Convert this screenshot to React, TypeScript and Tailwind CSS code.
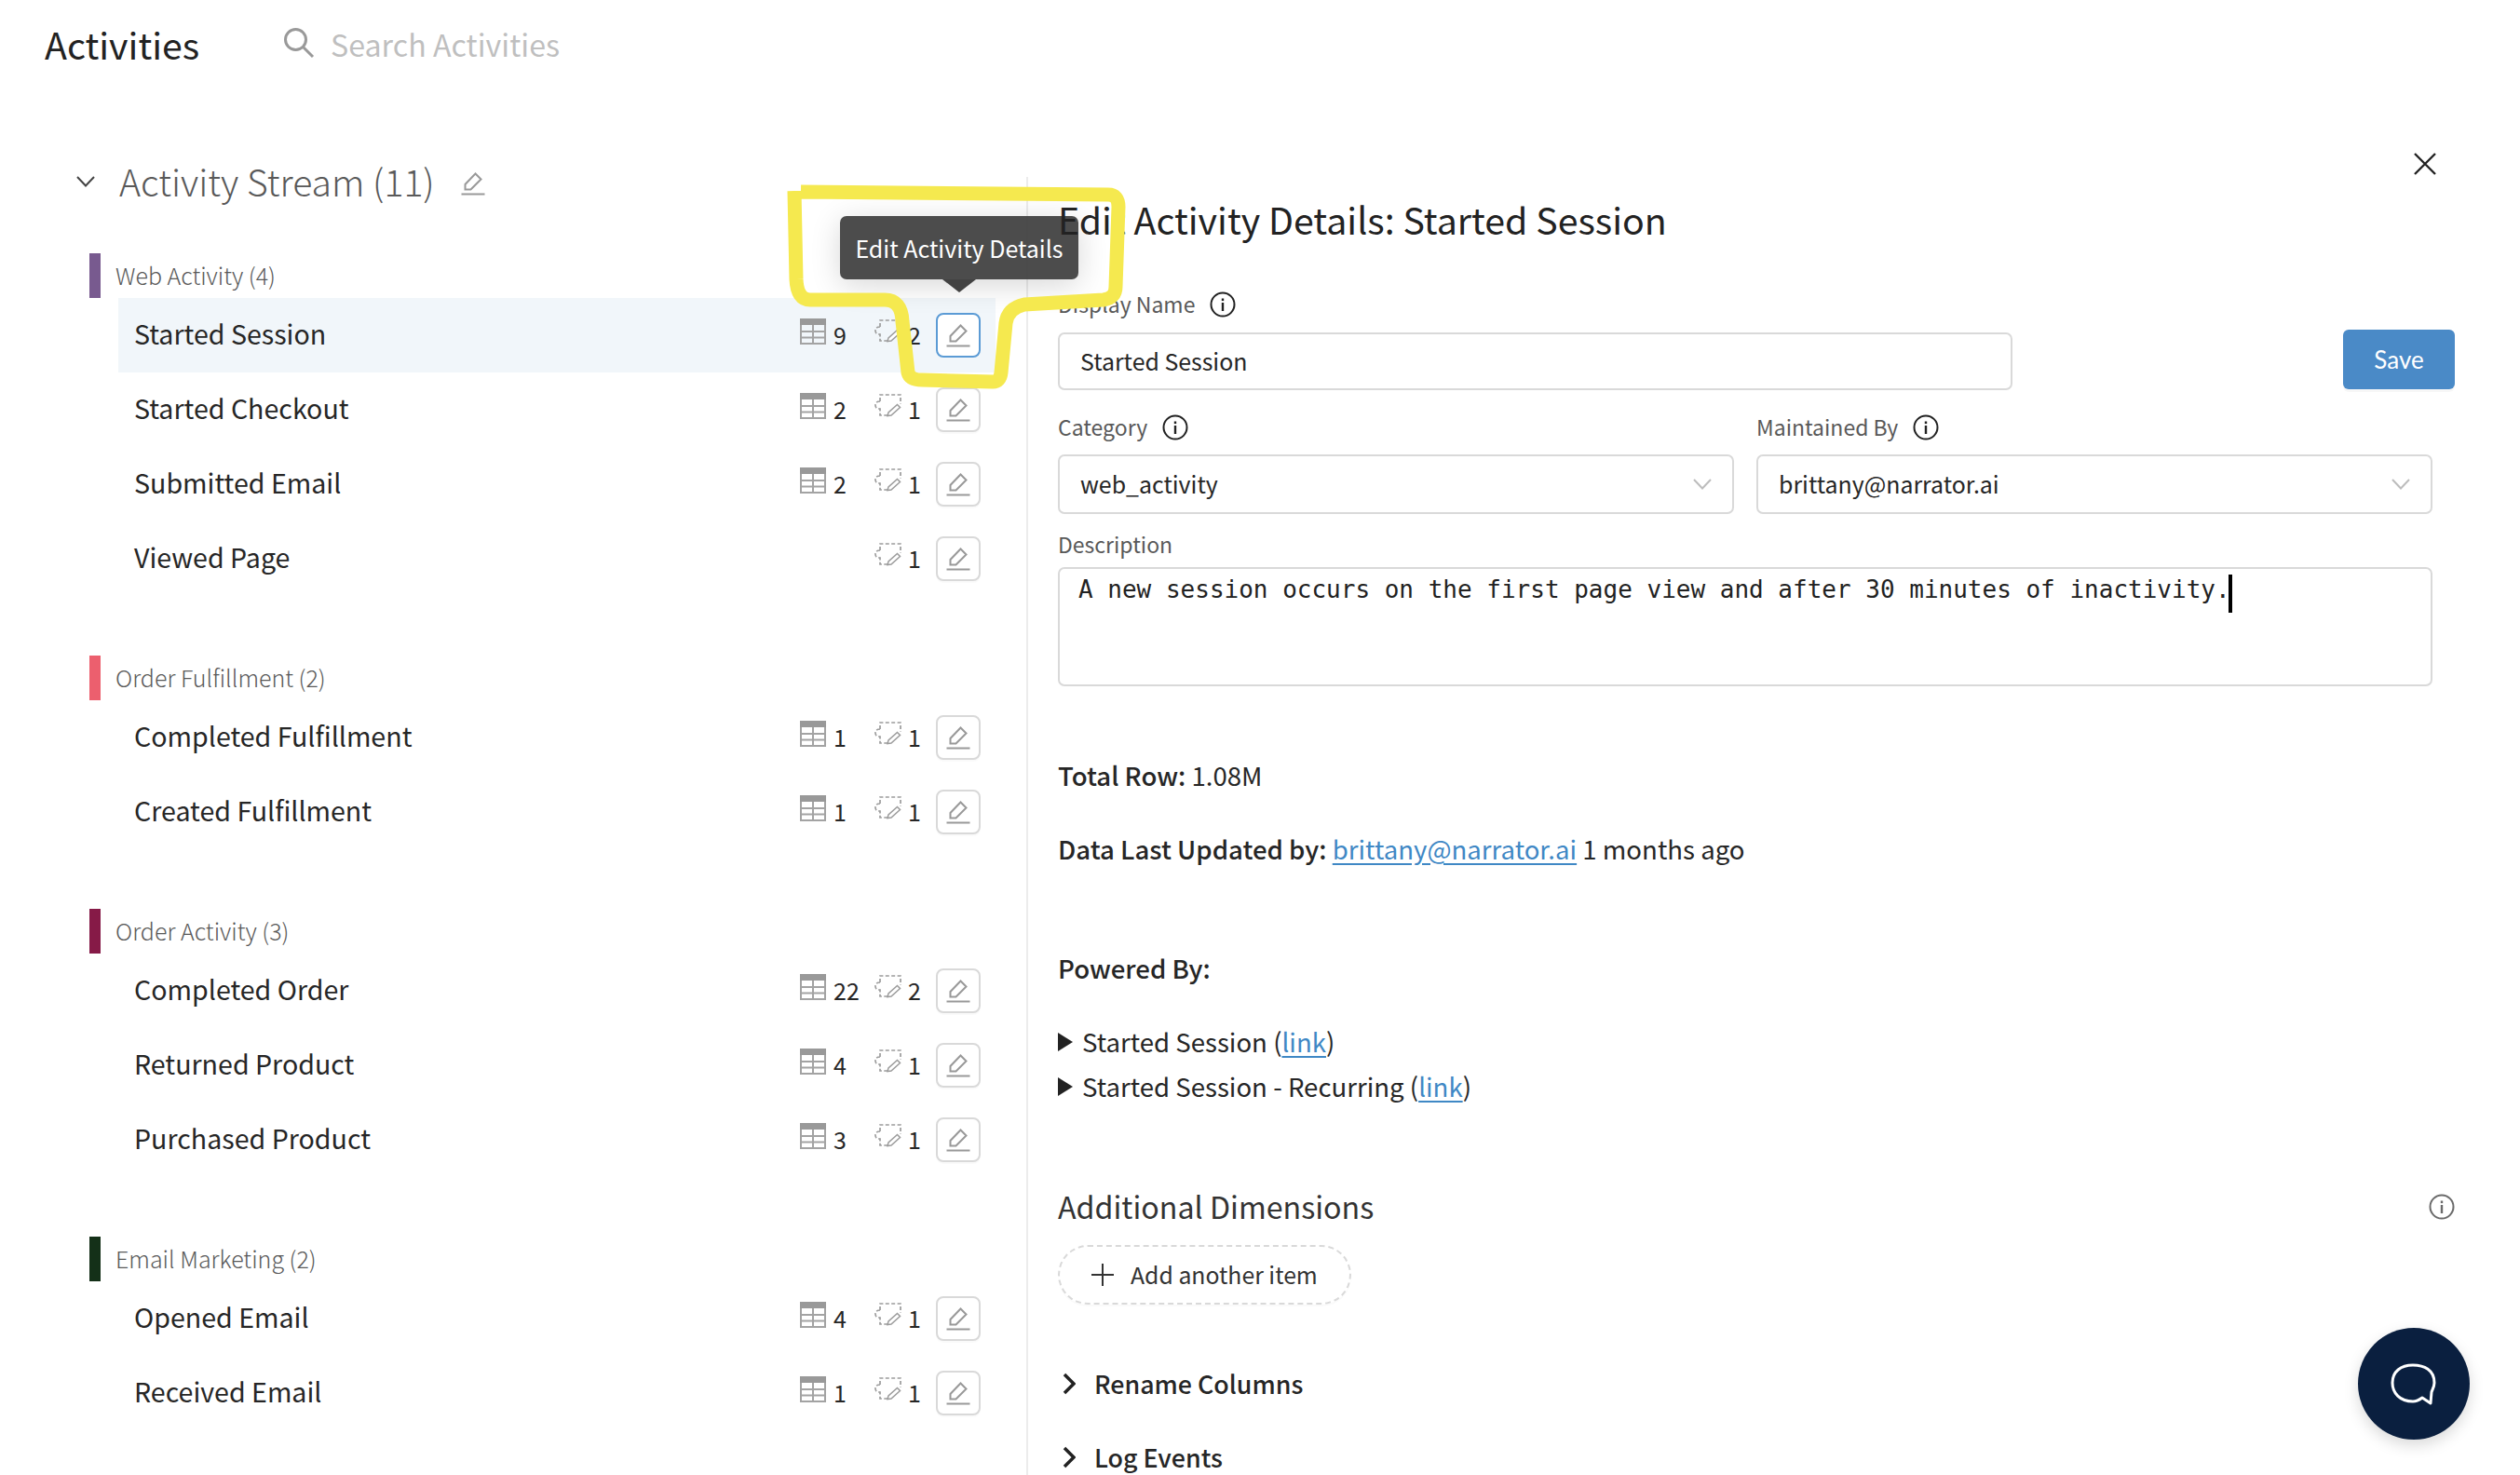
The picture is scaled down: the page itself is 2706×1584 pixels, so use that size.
import React from 'react';

const PencilIcon = ({ color = '#999' }: { color?: string }) => (
  <svg width="26" height="26" viewBox="0 0 26 26" fill="none" stroke={color} strokeWidth="2">
    <path d="M4.5 19.5 V14 L15.5 2.5 L21.5 8.5 L10.5 19.5 Z" strokeLinejoin="miter" />
    <path d="M0.5 24.5 H25.5" />
  </svg>
);

const TableIcon = () => (
  <svg width="28" height="28" viewBox="0 0 28 28" fill="none" stroke="#a3a3a3" strokeWidth="2" className="mt-[-8px]">
    <rect x="1" y="1" width="26" height="26" />
    <rect x="0" y="0" width="28" height="7" fill="#999" stroke="none" />
    <path d="M1 14 H27 M1 20.5 H27 M14 7 V27" />
  </svg>
);

const TagIcon = () => (
  <svg width="30" height="26" viewBox="0 0 30 26" fill="none" className="mt-[-8px]">
    <path
      d="M6 8 V1 H28 V11 M6 8 C2 8 1 10 1 12 C1 15 3 16 6 16 V23 H14"
      stroke="#9c9c9c"
      strokeWidth="1.7"
      strokeDasharray="4 2.4"
    />
    <path d="M14 23.5 L15 20 L24.5 11.5 L27.5 14.5 L18 23 Z" stroke="#9c9c9c" strokeWidth="1.5" fill="#fff" />
  </svg>
);

const InfoIcon = ({ color = '#222' }: { color?: string }) => (
  <svg width="28" height="28" viewBox="0 0 28 28" fill="none">
    <circle cx="14" cy="14" r="12.5" stroke={color} strokeWidth="2" />
    <rect x="12.8" y="12" width="2.4" height="9" fill={color} />
    <rect x="12.8" y="7.5" width="2.4" height="2.6" fill={color} />
  </svg>
);

const ChevronDown = () => (
  <svg width="20" height="12" viewBox="0 0 20 12" fill="none" stroke="#bdbdbd" strokeWidth="2">
    <path d="M1 1 L10 10.5 L19 1" />
  </svg>
);

const ChevronRight = () => (
  <svg width="14" height="24" viewBox="0 0 14 24" fill="none" stroke="#222" strokeWidth="3.5">
    <path d="M2 2 L12 12 L2 22" />
  </svg>
);

const Triangle = () => (
  <svg width="16" height="20" viewBox="0 0 16 20" className="shrink-0">
    <path d="M0 0 L16 10 L0 20 Z" fill="#222" />
  </svg>
);

type Row = { name: string; table?: number; tag: number; active?: boolean };
type Group = { label: string; color: string; rows: Row[] };

const groups: Group[] = [
  {
    label: 'Web Activity (4)',
    color: 'bg-[#785a8f]',
    rows: [
      { name: 'Started Session', table: 9, tag: 2, active: true },
      { name: 'Started Checkout', table: 2, tag: 1 },
      { name: 'Submitted Email', table: 2, tag: 1 },
      { name: 'Viewed Page', tag: 1 },
    ],
  },
  {
    label: 'Order Fulfillment (2)',
    color: 'bg-[#ec5f6e]',
    rows: [
      { name: 'Completed Fulfillment', table: 1, tag: 1 },
      { name: 'Created Fulfillment', table: 1, tag: 1 },
    ],
  },
  {
    label: 'Order Activity (3)',
    color: 'bg-[#861a47]',
    rows: [
      { name: 'Completed Order', table: 22, tag: 2 },
      { name: 'Returned Product', table: 4, tag: 1 },
      { name: 'Purchased Product', table: 3, tag: 1 },
    ],
  },
  {
    label: 'Email Marketing (2)',
    color: 'bg-[#143018]',
    rows: [
      { name: 'Opened Email', table: 4, tag: 1 },
      { name: 'Received Email', table: 1, tag: 1 },
    ],
  },
];

const ActivityRow = ({ row }: { row: Row }) => (
  <div className={`ml-[127px] mr-[33px] h-[80px] flex items-center pl-[17px] pr-[16px] ${row.active ? 'bg-[#f1f6fa]' : ''}`}>
    <span className="flex-1 pb-[3px] text-[28.6px] leading-none text-[#262626]">{row.name}</span>
    <div className="w-[80px] flex items-center gap-[8px] text-[25px] leading-none text-[#262626]">
      {row.table !== undefined && (
        <>
          <TableIcon />
          <span className="pb-[1px]">{row.table}</span>
        </>
      )}
    </div>
    <div className="w-[66px] flex items-center gap-[6px] text-[25px] leading-none text-[#262626]">
      <TagIcon />
      <span className="pb-[1px]">{row.tag}</span>
    </div>
    <div
      className={`w-[48px] h-[48px] rounded-[8px] border-2 bg-white flex items-center justify-center ${
        row.active ? 'border-[#5b9bd5]' : 'border-[#d9d9d9] shadow-[0_2px_0_rgba(0,0,0,0.02)]'
      }`}
    >
      <PencilIcon />
    </div>
  </div>
);

const Label = ({ children, info }: { children: React.ReactNode; info?: boolean }) => (
  <div className="h-[30px] flex items-center gap-[16px] text-[23px] leading-none text-[#595959]">
    <span className="pb-[2px]">{children}</span>
    {info && <InfoIcon />}
  </div>
);

const Box = ({ children, className = '' }: { children: React.ReactNode; className?: string }) => (
  <div className={`rounded-[7px] border-2 border-[#d9d9d9] bg-white flex items-center pb-[1px] text-[24.9px] leading-none text-[#262626] ${className}`}>
    {children}
  </div>
);

const Select = ({ value, width }: { value: string; width: string }) => (
  <Box className={`${width} h-[64px] pl-[22px] pr-[22px] justify-between`}>
    <span>{value}</span>
    <ChevronDown />
  </Box>
);

const Line = ({ children, className = '' }: { children: React.ReactNode; className?: string }) => (
  <div className={`h-[40px] pb-[2px] flex items-center text-[27.6px] leading-none text-[#262626] whitespace-pre ${className}`}>{children}</div>
);

const Toggle = ({ children, className = '' }: { children: React.ReactNode; className?: string }) => (
  <div className={`h-[40px] pb-[2px] pl-[5px] flex items-center gap-[20px] text-[26.8px] font-medium leading-none text-[#262626] ${className}`}>
    <ChevronRight />
    <span>{children}</span>
  </div>
);

const DocLink = ({ children }: { children: React.ReactNode }) => (
  <a className="text-[#3f88c5] underline underline-offset-[4px]">{children}</a>
);

export default function App() {
  return (
    <div className="relative w-[2706px] h-[1584px] overflow-hidden bg-white font-['Noto_Sans_CJK_SC','Noto_Sans',sans-serif]">
      <header className="h-[96px] mb-[64px] pl-[48px] flex items-center">
        <h1 className="w-[256px] pb-[2px] text-[39.3px] leading-none text-[#222]">Activities</h1>
        <svg width="34" height="34" viewBox="0 0 34 34" fill="none" stroke="#999" strokeWidth="3" className="mt-[-4px]">
          <circle cx="13.5" cy="13.5" r="11" />
          <path d="M21.5 21.5 L32 32" />
        </svg>
        <span className="ml-[17px] pb-[2px] text-[32.2px] leading-none text-[#bfbfbf]">Search Activities</span>
      </header>

      <main className="flex h-[1424px]">
        <section className="w-[1102px] relative z-0">
          <div className="h-[70px] flex items-center pl-[82px]">
            <svg width="20" height="12" viewBox="0 0 20 12" fill="none" stroke="#444" strokeWidth="2">
              <path d="M1 1 L10 10.5 L19 1" />
            </svg>
            <span className="ml-[26px] text-[39.2px] font-light leading-none text-[#595959]">Activity Stream (11)</span>
            <span className="ml-[28px] mt-[4px]">
              <PencilIcon />
            </span>
          </div>
          <div className="pt-[42px] flex flex-col gap-[64px]">
            {groups.map((g) => (
              <div key={g.label}>
                <div className="h-[48px] flex pl-[96px]">
                  <span className={`w-[12px] h-[48px] ${g.color}`} />
                  <span className="ml-[16px] pt-[6px] text-[25px] font-light leading-[34px] text-[#595959]">{g.label}</span>
                </div>
                {g.rows.map((r) => (
                  <ActivityRow key={r.name} row={r} />
                ))}
              </div>
            ))}
          </div>
        </section>

        <div className="w-[2px] mt-[30px] bg-[#ececec]" />

        <section className="flex-1 pl-[32px] pr-[70px]">
          <div className="h-[32px] flex justify-end pr-[20px]">
            <svg width="24" height="24" viewBox="0 0 24 24" fill="none" stroke="#222" strokeWidth="2.4" className="mt-[4px]">
              <path d="M1 1 L23 23 M23 1 L1 23" />
            </svg>
          </div>
          <h2 className="relative z-20 mt-[14px] h-[60px] pb-[2px] flex items-center text-[39.3px] leading-none text-[#222]">
            Edit Activity Details: Started Session
          </h2>
          <div className="mt-[46px]">
            <Label info>Display Name</Label>
          </div>
          <div className="mt-[15px] flex justify-between">
            <Box className="w-[1025px] h-[62px] pl-[22px]">Started Session</Box>
            <button className="w-[120px] h-[64px] mt-[-3px] rounded-[6px] bg-[#4a8ac7] text-white text-[26px] font-['Lato',sans-serif] shadow-[0_3px_0_rgba(0,0,0,0.03)]">
              Save
            </button>
          </div>
          <div className="mt-[25px] flex gap-[24px]">
            <div>
              <Label info>Category</Label>
              <div className="mt-[14px]">
                <Select value="web_activity" width="w-[726px]" />
              </div>
            </div>
            <div>
              <Label info>Maintained By</Label>
              <div className="mt-[14px]">
                <Select value="brittany@narrator.ai" width="w-[726px]" />
              </div>
            </div>
          </div>
          <div className="mt-[18px]">
            <Label>Description</Label>
          </div>
          <div className="mt-[9px] w-[1476px] h-[128px] rounded-[7px] border-2 border-[#d9d9d9] pl-[20px] pt-[2px] flex items-start">
            <span className="font-['DejaVu_Sans_Mono',monospace] text-[26px] leading-[40px] text-[#222] whitespace-pre">
              A new session occurs on the first page view and after 30 minutes of inactivity.
            </span>
            <span className="w-[4px] h-[41px] ml-[-2px] bg-black mt-[4px]" />
          </div>
          <Line className="mt-[77px]">
            <span>
              <b className="font-medium">Total Row:</b> 1.08M
            </span>
          </Line>
          <Line className="mt-[39px]">
            <span>
              <b className="font-medium">Data Last Updated by:</b> <DocLink>brittany@narrator.ai</DocLink> 1 months ago
            </span>
          </Line>
          <Line className="mt-[88px] font-medium">Powered By:</Line>
          <Line className="mt-[39px] gap-[10px]">
            <Triangle />
            <span>
              Started Session (<DocLink>link</DocLink>)
            </span>
          </Line>
          <Line className="mt-[8px] gap-[10px]">
            <Triangle />
            <span>
              Started Session - Recurring (<DocLink>link</DocLink>)
            </span>
          </Line>
          <div className="mt-[83px] h-[50px] flex items-center justify-between">
            <span className="pb-[2px] text-[32.2px] leading-none text-[#333]">Additional Dimensions</span>
            <InfoIcon color="#6b6b6b" />
          </div>
          <div className="mt-[16px] w-[315px] h-[64px] rounded-full border-2 border-dashed border-[#d9d9d9] flex items-center pl-[34px] gap-[18px] text-[24.8px] leading-none text-[#333] shadow-[0_2px_0_rgba(0,0,0,0.02)]">
            <svg width="24" height="24" viewBox="0 0 24 24" stroke="#333" strokeWidth="2">
              <path d="M12 0 V24 M0 12 H24" />
            </svg>
            <span className="pb-[2px]">Add another item</span>
          </div>
          <Toggle className="mt-[66px]">Rename Columns</Toggle>
          <Toggle className="mt-[39px]">Log Events</Toggle>
        </section>
      </main>

      {/* tooltip over the list */}
      <div className="absolute z-10 left-[902px] top-[232px] w-[256px] h-[68px] rounded-[7px] bg-[#424242]/95 flex items-center justify-center text-[25px] leading-none text-white shadow-[0_6px_32px_rgba(0,0,0,0.16)]">
        Edit Activity Details
        <span className="absolute left-[110px] top-[68px] w-0 h-0 border-x-[18px] border-x-transparent border-t-[14px] border-t-[#424242]" />
      </div>

      {/* hand-drawn highlight */}
      <svg className="absolute z-30 left-0 top-0 pointer-events-none" width="2706" height="1584" fill="none">
        <path
          d="M853 205 L855 300 Q856 322 870 322 L950 322 Q968 322 969 345 L975 400 Q977 408 990 408 L1066 410 Q1074 410 1075 400 L1080 347 Q1082 331 1100 327 L1185 322 Q1198 320 1198 308 L1201 222 Q1201 209 1190 209 L860 206"
          stroke="#f5e94f"
          strokeWidth="15"
          strokeLinejoin="round"
        />
      </svg>

      {/* chat launcher */}
      <div className="absolute z-30 left-[2532px] top-[1426px] w-[120px] h-[120px] rounded-full bg-[#0a1f3f] flex items-center justify-center shadow-[0_6px_16px_rgba(0,0,0,0.15)]">
        <svg width="50" height="46" viewBox="0 0 50 46" fill="none" stroke="#fff" strokeWidth="3" strokeLinejoin="round" className="mt-[2px]">
          <path d="M24 2 C36 2 47 7 47 21 C47 25 45 28 44 31 L43 43 L34 37 C30 40 27 41 24 41 C10 41 2 32 2 21 C2 9 11 2 24 2 Z" />
        </svg>
      </div>
    </div>
  );
}
